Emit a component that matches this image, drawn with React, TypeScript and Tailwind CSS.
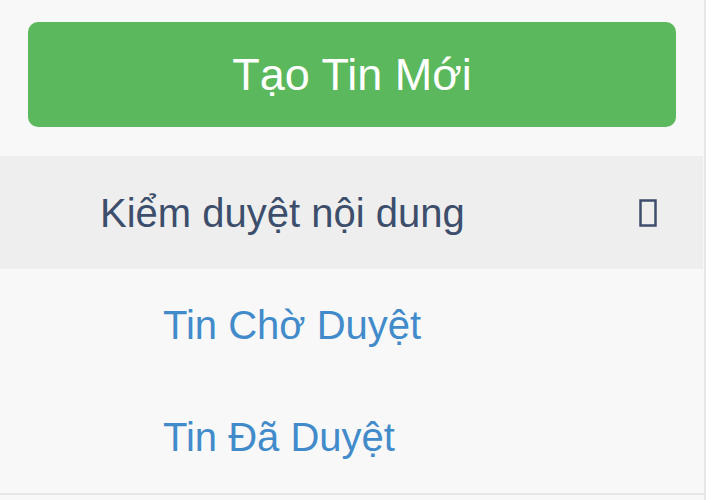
import React from "react";

const subItems = ["Tin Chờ Duyệt", "Tin Đã Duyệt"];

const MissingGlyph = () => (
  <svg width="18" height="28" viewBox="0 0 18 28" className="shrink-0">
    <rect x="1.5" y="1.5" width="15" height="25" fill="none" stroke="#3c4e6b" strokeWidth="2.5" />
  </svg>
);

export default function App() {
  return (
    <div className="w-[706px] h-[500px] bg-[#f8f8f8] border-r-2 border-[#e7e7e7] font-['Liberation_Sans',Arial,sans-serif]">
      <div className="px-[28px] pt-[22px] pb-[29px]">
        <button className="w-full h-[105px] rounded-[10px] bg-[#5cb85c] text-white text-[45px] leading-none">
          Tạo Tin Mới
        </button>
      </div>
      <div className="h-[113px] bg-[#eeeeee] flex items-center justify-between pl-[100px] pr-[46px] mr-[1px]">
        <span className="text-[40px] text-[#3c4e6b]">Kiểm duyệt nội dung</span>
        <MissingGlyph />
      </div>
      <ul className="border-b-2 border-[#e7e7e7]">
        {subItems.map((item) => (
          <li key={item} className="h-[112px] flex items-center pl-[163px]">
            <a href="#" className="text-[40px] text-[#428bca]">
              {item}
            </a>
          </li>
        ))}
      </ul>
    </div>
  );
}
